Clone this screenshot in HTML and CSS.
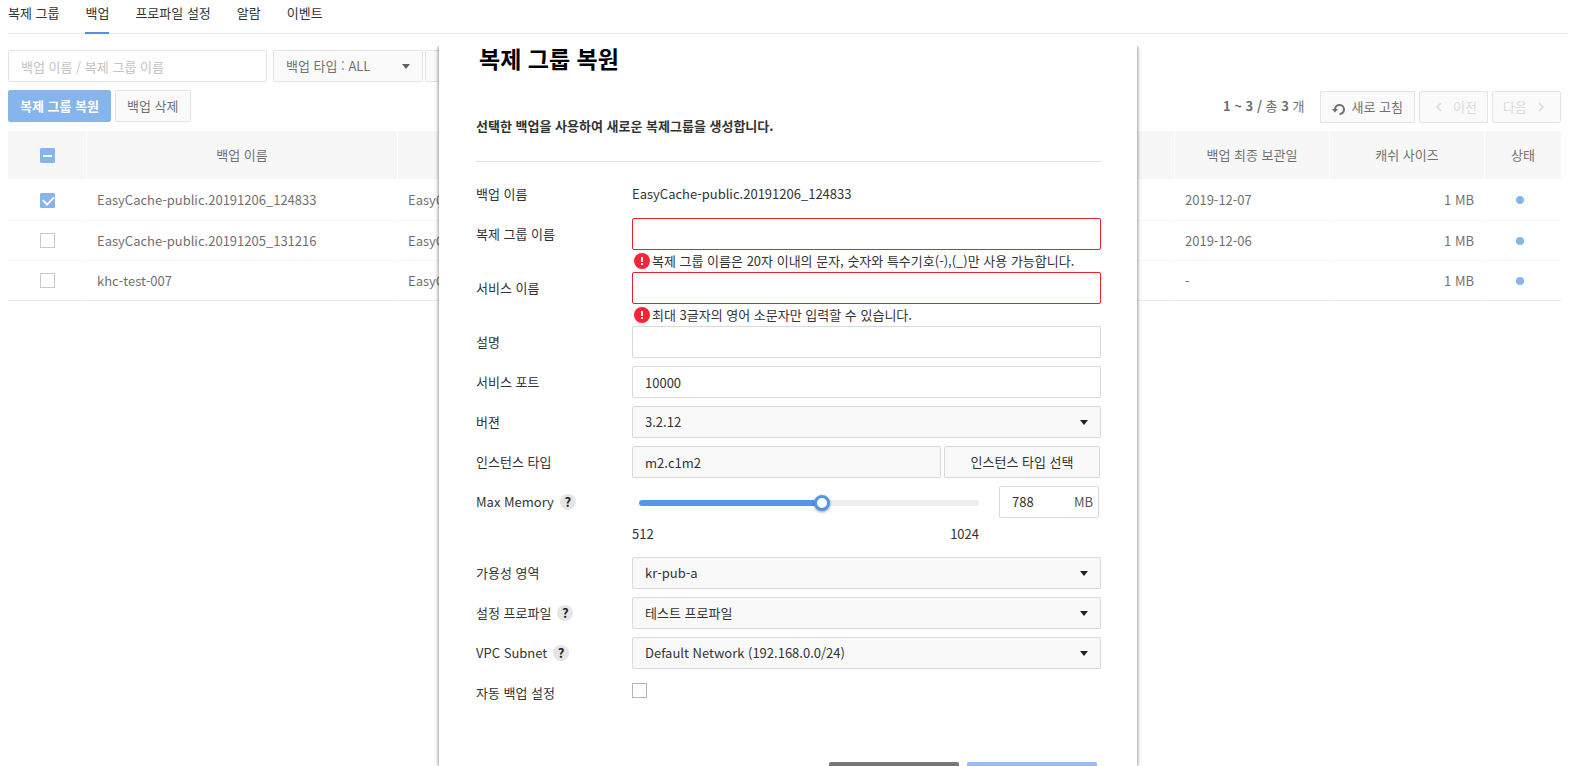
FILE: index.html
```html
<!DOCTYPE html>
<html lang="ko">
<head>
  <meta charset="UTF-8" />
  <meta name="viewport" content="width=device-width, initial-scale=1.0" />
  <title>EasyCache</title>
  <link rel="stylesheet" href="styles.css">
</head>
<body>
  <nav class="tabs">
    <a href="#group">복제 그룹</a>
    <a href="#backup" class="active">백업</a>
    <a href="#profile">프로파일 설정</a>
    <a href="#alarm">알람</a>
    <a href="#event">이벤트</a>
  </nav>

  <main class="workspace">
    <div class="backup-list">
      <div class="filters">
        <input type="text" class="field search" placeholder="백업 이름 / 복제 그룹 이름" aria-label="백업 이름 / 복제 그룹 이름">
        <div class="select filter">
          <select aria-label="백업 타입"><option>백업 타입 : ALL</option></select>
        </div>
        <div class="select filter">
          <select aria-label="상태"><option>상태 : ALL</option></select>
        </div>
      </div>

      <div class="toolbar">
        <div class="actions">
          <button class="btn primary">복제 그룹 복원</button>
          <button class="btn">백업 삭제</button>
        </div>
        <div class="paging">
          <span class="count"><b>1 ~ 3 /</b> 총 <b>3</b> 개</span>
          <button class="btn">
            <svg class="icon" width="14" height="14" viewBox="0 0 14 14"><path d="M3 8.5V7a4.5 4.5 0 1 1 4.5 5" fill="none" stroke="currentColor" stroke-width="2"/><path d="M0 7h6L3 10.5z" fill="currentColor"/></svg>
            새로 고침
          </button>
          <button class="btn page" disabled>
            <svg width="6" height="10" viewBox="0 0 6 10"><path d="M5 1L1 5l4 4" fill="none" stroke="currentColor" stroke-width="1.6"/></svg>
            이전
          </button>
          <button class="btn page" disabled>
            다음
            <svg width="6" height="10" viewBox="0 0 6 10"><path d="M1 1l4 4-4 4" fill="none" stroke="currentColor" stroke-width="1.6"/></svg>
          </button>
        </div>
      </div>

      <table class="grid">
        <thead>
          <tr>
            <th class="col-check"><input type="checkbox" class="check partial" aria-label="전체 선택"></th>
            <th class="col-name">백업 이름</th>
            <th>복제 그룹 이름</th>
            <th class="col-data">백업 최종 보관일</th>
            <th class="col-data">캐쉬 사이즈</th>
            <th class="col-state">상태</th>
          </tr>
        </thead>
        <tbody>
          <tr>
            <td><input type="checkbox" class="check" checked aria-label="EasyCache-public.20191206_124833"></td>
            <td>EasyCache-public.20191206_124833</td>
            <td>EasyCache</td>
            <td>2019-12-07</td>
            <td class="size">1 MB</td>
            <td class="state"><span class="dot"></span></td>
          </tr>
          <tr>
            <td><input type="checkbox" class="check" aria-label="EasyCache-public.20191205_131216"></td>
            <td>EasyCache-public.20191205_131216</td>
            <td>EasyCache</td>
            <td>2019-12-06</td>
            <td class="size">1 MB</td>
            <td class="state"><span class="dot"></span></td>
          </tr>
          <tr>
            <td><input type="checkbox" class="check" aria-label="khc-test-007"></td>
            <td>khc-test-007</td>
            <td>EasyCache</td>
            <td>-</td>
            <td class="size">1 MB</td>
            <td class="state"><span class="dot"></span></td>
          </tr>
        </tbody>
      </table>
    </div>

    <form class="modal">
      <h2>복제 그룹 복원</h2>
      <p class="desc">선택한 백업을 사용하여 새로운 복제그룹을 생성합니다.</p>

      <div class="row">
        <span class="label">백업 이름</span>
        <div class="control plain">EasyCache-public.20191206_124833</div>
      </div>
      <div class="row invalid">
        <label class="label" for="groupName">복제 그룹 이름</label>
        <div class="control">
          <input type="text" class="field" id="groupName">
          <p class="error">
            <svg width="16" height="16" viewBox="0 0 16 16"><circle cx="8" cy="8" r="8" fill="#fa2335"/><path d="M7 4h2v5H7zM7 10h2v2H7z" fill="#fff"/></svg>
            복제 그룹 이름은 20자 이내의 문자, 숫자와 특수기호(-),(_)만 사용 가능합니다.
          </p>
        </div>
      </div>
      <div class="row invalid">
        <label class="label" for="serviceName">서비스 이름</label>
        <div class="control">
          <input type="text" class="field" id="serviceName">
          <p class="error">
            <svg width="16" height="16" viewBox="0 0 16 16"><circle cx="8" cy="8" r="8" fill="#fa2335"/><path d="M7 4h2v5H7zM7 10h2v2H7z" fill="#fff"/></svg>
            최대 3글자의 영어 소문자만 입력할 수 있습니다.
          </p>
        </div>
      </div>
      <div class="row">
        <label class="label" for="description">설명</label>
        <div class="control"><input type="text" class="field" id="description"></div>
      </div>
      <div class="row">
        <label class="label" for="port">서비스 포트</label>
        <div class="control"><input type="text" class="field" id="port" value="10000"></div>
      </div>
      <div class="row">
        <label class="label" for="version">버젼</label>
        <div class="control select"><select id="version"><option>3.2.12</option></select></div>
      </div>
      <div class="row">
        <label class="label" for="instance">인스턴스 타입</label>
        <div class="control instance">
          <input type="text" class="field" id="instance" value="m2.c1m2" readonly>
          <button type="button" class="btn">인스턴스 타입 선택</button>
        </div>
      </div>
      <div class="row">
        <div class="label"><label for="memory">Max Memory</label><button type="button" class="help">?</button></div>
        <div class="control memory">
          <div class="slider">
            <input type="range" id="memory" min="512" max="1024" value="788">
            <div class="range"><span>512</span><span>1024</span></div>
          </div>
          <div class="amount">
            <input type="text" id="memoryValue" value="788" aria-label="Max Memory">
            <label for="memoryValue">MB</label>
          </div>
        </div>
      </div>
      <div class="row">
        <label class="label" for="zone">가용성 영역</label>
        <div class="control select"><select id="zone"><option>kr-pub-a</option></select></div>
      </div>
      <div class="row">
        <div class="label"><label for="profileSelect">설정 프로파일</label><button type="button" class="help">?</button></div>
        <div class="control select"><select id="profileSelect"><option>테스트 프로파일</option></select></div>
      </div>
      <div class="row">
        <div class="label"><label for="subnet">VPC Subnet</label><button type="button" class="help">?</button></div>
        <div class="control select"><select id="subnet"><option>Default Network (192.168.0.0/24)</option></select></div>
      </div>
      <div class="row">
        <label class="label" for="autoBackup">자동 백업 설정</label>
        <div class="control auto"><input type="checkbox" class="check" id="autoBackup"></div>
      </div>

      <div class="modal-buttons">
        <button type="button" class="cancel" aria-label="취소"></button>
        <button type="button" class="confirm" aria-label="확인" disabled></button>
      </div>
    </form>
  </main>
</body>
</html>
```
FILE: styles.css
```css
* {
  margin: 0;
  padding: 0;
  box-sizing: border-box;
}
body {
  display: flex;
  flex-direction: column;
  height: 100vh;
  padding: 0 22px 0 8px;
  overflow: hidden;
  background: #fff;
  color: #333;
  font-family: "Noto Sans CJK KR", sans-serif;
  font-size: 13px;
  line-height: 20px;
}
input,
select,
button {
  font: inherit;
  color: inherit;
}
button {
  cursor: pointer;
}

/* tabs */
.tabs {
  display: flex;
  gap: 26px;
  height: 34px;
  border-bottom: 1px solid #ebebeb;
}
.tabs a {
  height: 34px;
  line-height: 26px;
  color: #333;
  text-decoration: none;
}
.tabs .active {
  border-bottom: 2px solid #4b92e5;
}

/* backup list */
.workspace {
  position: relative;
  flex: 1;
  margin-top: 12px;
  overflow: hidden;
}
.backup-list {
  padding: 4px 7px 0 0;
  opacity: 0.7;
}
.filters {
  display: flex;
  gap: 2px;
  margin-bottom: 8px;
}
.field {
  width: 100%;
  height: 32px;
  padding: 0 12px;
  border: 1px solid #d9d9d9;
  border-radius: 2px;
  background: #fff;
  outline: none;
}
.field[readonly] {
  background: #f9f9f9;
}
.search {
  width: 259px;
  margin-right: 4px;
}
.search::placeholder {
  color: #aaa;
}
.select {
  position: relative;
}
.select select {
  display: block;
  width: 100%;
  height: 32px;
  padding: 0 12px;
  border: 1px solid #d9d9d9;
  border-radius: 2px;
  background: #f9f9f9;
  appearance: none;
}
.select::after {
  content: "";
  position: absolute;
  top: 14px;
  right: 13px;
  border: 4px solid transparent;
  border-top: 5px solid #222;
  border-bottom: 0;
  pointer-events: none;
}
.filter {
  width: 150px;
}
.btn {
  display: flex;
  align-items: center;
  justify-content: center;
  gap: 6px;
  height: 32px;
  padding: 0 11px;
  border: 1px solid #d9d9d9;
  border-radius: 2px;
  background: #f9f9f9;
  white-space: nowrap;
}
.btn.primary {
  border-color: #5497e8;
  background: #5497e8;
  color: #fff;
  font-weight: bold;
}
.btn.page {
  gap: 11px;
  width: 69px;
  padding: 0 10px;
  color: #ccc;
}
.btn.page:nth-last-child(2) {
  justify-content: flex-end;
}
.btn.page:last-child {
  justify-content: flex-start;
}
.icon {
  margin-top: 4px;
}
.toolbar {
  display: flex;
  justify-content: space-between;
  height: 33px;
  margin-bottom: 8px;
}
.actions,
.paging {
  display: flex;
  gap: 4px;
}
.paging {
  padding-top: 1px;
}
.count {
  margin-right: 11px;
  line-height: 30px;
}
.grid {
  width: 100%;
  border-spacing: 0;
  table-layout: fixed;
}
.grid th {
  height: 49px;
  border-right: 1px solid #fff;
  border-bottom: 1px solid #fff;
  background: #f4f4f4;
  font-weight: normal;
}
.grid td {
  height: 40px;
  padding: 0 10px;
  border-right: 1px solid #fff;
  border-bottom: 1px solid #f0f0f0;
}
.grid tr:first-child td {
  height: 41px;
}
.grid th:last-child,
.grid td:last-child {
  border-right: 0;
}
.grid tr:last-child td {
  border-bottom-color: #e0e0e0;
}
.col-check {
  width: 79px;
}
.col-name {
  width: 311px;
}
.col-data {
  width: 155px;
}
.col-state {
  width: 76px;
}
.grid .size {
  text-align: right;
}
.grid .state {
  padding: 0 6px 0 0;
}
.grid .check {
  margin: 0 auto;
}
.dot {
  display: block;
  width: 8px;
  height: 8px;
  margin: 0 auto;
  border-radius: 50%;
  background: #5497e8;
}

/* checkbox */
.check {
  display: block;
  position: relative;
  width: 15px;
  height: 15px;
  border: 1px solid #b5b5b5;
  background: #fff;
  appearance: none;
}
.check:checked,
.check.partial {
  border-color: #5497e8;
  border-radius: 1px;
  background: #5497e8;
}
.check:checked::after {
  content: "";
  position: absolute;
  top: 2px;
  left: 2px;
  width: 9px;
  height: 5px;
  border: solid #fff;
  border-width: 0 0 2px 2px;
  transform: rotate(-45deg);
}
.check.partial::after {
  content: "";
  position: absolute;
  top: 6px;
  left: 2px;
  width: 9px;
  height: 2px;
  background: #fff;
}

/* restore modal */
.modal {
  position: absolute;
  top: 0;
  bottom: 0;
  left: 0;
  right: 0;
  width: 698px;
  margin: 0 auto;
  padding: 0 36px 0 37px;
  background: #fff;
  box-shadow: 0 0 4px rgba(0, 0, 0, 0.6);
  overflow: hidden;
}
.modal h2 {
  padding-left: 3px;
  color: #000;
  font-size: 23px;
  line-height: 24px;
}
.desc {
  margin-bottom: 16px;
  padding: 46px 0 25px;
  border-bottom: 1px solid #e0e0e0;
  font-weight: bold;
}
.row {
  display: flex;
  margin-bottom: 8px;
}
.label {
  display: flex;
  align-items: center;
  gap: 6px;
  width: 156px;
  height: 32px;
}
.control {
  flex: 1;
}
.plain {
  line-height: 32px;
}
.invalid {
  margin-bottom: 0;
}
.invalid .field {
  display: block;
  border-color: #e8202f;
}
.error {
  display: flex;
  align-items: center;
  gap: 2px;
  height: 22px;
  padding-left: 2px;
}
.instance {
  display: flex;
  gap: 3px;
  padding-right: 1px;
}
.instance .field {
  flex: 1;
}
.instance .btn {
  width: 156px;
}
.help {
  width: 16px;
  height: 16px;
  border: 0;
  border-radius: 50%;
  background: #e5e5e5;
  color: #222;
  font-weight: bold;
  line-height: 16px;
}
.memory {
  display: flex;
  gap: 20px;
}
.slider {
  flex: 1;
}
.slider input {
  display: block;
  width: calc(100% - 7px);
  height: 34px;
  margin-left: 7px;
  background: none;
  appearance: none;
}
.slider input::-webkit-slider-runnable-track {
  height: 6px;
  border-radius: 3px;
  background: linear-gradient(to right, #5497e8 54%, #ededed 54%);
}
.slider input::-webkit-slider-thumb {
  width: 16px;
  height: 16px;
  margin-top: -5px;
  border: 3px solid #5497e8;
  border-radius: 50%;
  background: #fff;
  box-shadow: 0 1px 3px rgba(0, 0, 0, 0.4);
  appearance: none;
}
.range {
  display: flex;
  justify-content: space-between;
  height: 29px;
  line-height: 28px;
}
.amount {
  display: flex;
  align-items: center;
  width: 100px;
  height: 32px;
  margin-right: 2px;
  padding: 0 5px 0 12px;
  border: 1px solid #d9d9d9;
  border-radius: 2px;
}
.amount input {
  flex: 1;
  min-width: 0;
  border: 0;
  outline: none;
}
.amount label {
  color: #555;
}
.auto {
  padding-top: 6px;
}
.modal-buttons {
  display: flex;
  justify-content: flex-end;
  gap: 8px;
  padding: 45px 4px 0 0;
}
.modal-buttons button {
  width: 130px;
  height: 40px;
  border: 0;
  border-radius: 2px;
  background: #777;
}
.modal-buttons .confirm {
  background: #93bdf0;
}
```
